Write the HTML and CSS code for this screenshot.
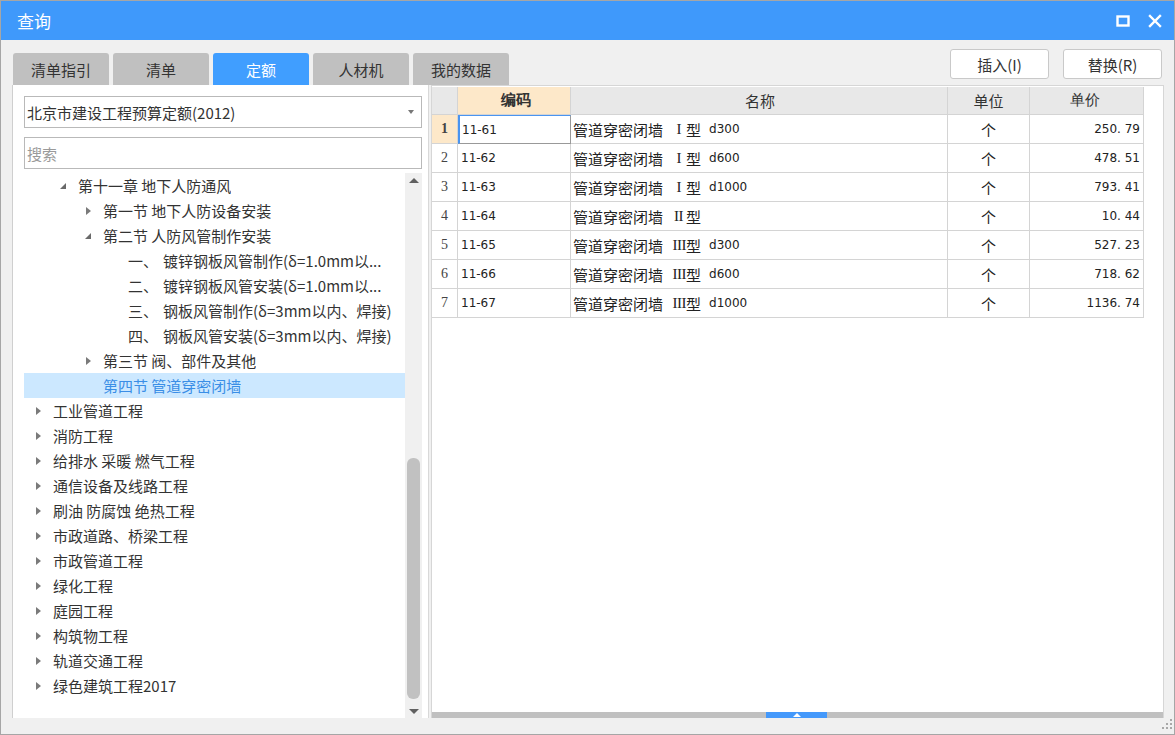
FILE: index.html
```html
<!DOCTYPE html>
<html lang="zh">
<head>
<meta charset="utf-8">
<title>查询</title>
<link rel="stylesheet" href="styles.css">
</head>
<body>
<div class="window">
  <div class="titlebar">
    <span class="title">查询</span>
    <div class="title-icons">
      <svg class="ico-max" width="14" height="12" viewBox="0 0 14 12"><rect x="1.5" y="1.5" width="11" height="9" fill="none" stroke="#fff" stroke-width="2.4"/></svg>
      <svg class="ico-close" width="14" height="14" viewBox="0 0 14 14"><path d="M2 2 L12 12 M12 2 L2 12" stroke="#fff" stroke-width="2.4" stroke-linecap="square"/></svg>
    </div>
  </div>
  <div class="content">
    <div class="toolbar">
      <div class="tabs">
        <div class="tab">清单指引</div>
        <div class="tab">清单</div>
        <div class="tab active">定额</div>
        <div class="tab">人材机</div>
        <div class="tab">我的数据</div>
      </div>
      <div class="buttons">
        <button class="btn">插入(I)</button>
        <button class="btn">替换(R)</button>
      </div>
    </div>
    <div class="main">
      <div class="left">
        <div class="select">
          <span>北京市建设工程预算定额(2012)</span>
          <span class="caret"></span>
        </div>
        <div class="search">搜索</div>
        <div class="tree-wrap">
          <div class="tree">
            <div class="node l1"><span class="arr open"></span><span class="txt">第十一章 地下人防通风</span></div>
            <div class="node l2"><span class="arr closed"></span><span class="txt">第一节 地下人防设备安装</span></div>
            <div class="node l2"><span class="arr open"></span><span class="txt">第二节 人防风管制作安装</span></div>
            <div class="node l3"><span class="num">一、</span><span class="txt">镀锌钢板风管制作(δ=1.0mm以...</span></div>
            <div class="node l3"><span class="num">二、</span><span class="txt">镀锌钢板风管安装(δ=1.0mm以...</span></div>
            <div class="node l3"><span class="num">三、</span><span class="txt">钢板风管制作(δ=3mm以内、焊接)</span></div>
            <div class="node l3"><span class="num">四、</span><span class="txt">钢板风管安装(δ=3mm以内、焊接)</span></div>
            <div class="node l2"><span class="arr closed"></span><span class="txt">第三节 阀、部件及其他</span></div>
            <div class="node l2 selected"><span class="arr none"></span><span class="txt">第四节 管道穿密闭墙</span></div>
            <div class="node l0"><span class="arr closed"></span><span class="txt">工业管道工程</span></div>
            <div class="node l0"><span class="arr closed"></span><span class="txt">消防工程</span></div>
            <div class="node l0"><span class="arr closed"></span><span class="txt">给排水 采暖 燃气工程</span></div>
            <div class="node l0"><span class="arr closed"></span><span class="txt">通信设备及线路工程</span></div>
            <div class="node l0"><span class="arr closed"></span><span class="txt">刷油 防腐蚀 绝热工程</span></div>
            <div class="node l0"><span class="arr closed"></span><span class="txt">市政道路、桥梁工程</span></div>
            <div class="node l0"><span class="arr closed"></span><span class="txt">市政管道工程</span></div>
            <div class="node l0"><span class="arr closed"></span><span class="txt">绿化工程</span></div>
            <div class="node l0"><span class="arr closed"></span><span class="txt">庭园工程</span></div>
            <div class="node l0"><span class="arr closed"></span><span class="txt">构筑物工程</span></div>
            <div class="node l0"><span class="arr closed"></span><span class="txt">轨道交通工程</span></div>
            <div class="node l0"><span class="arr closed"></span><span class="txt">绿色建筑工程2017</span></div>
          </div>
          <div class="vscroll">
            <span class="sarrow up"></span>
            <div class="vtrack"><div class="vthumb"></div></div>
            <span class="sarrow down"></span>
          </div>
        </div>
      </div>
      <div class="right">
        <div class="grid">
          <div class="grow head">
            <div class="c rn"></div>
            <div class="c code hl">编码</div>
            <div class="c name">名称</div>
            <div class="c unit">单位</div>
            <div class="c price">单价</div>
          </div>
          <div class="grow">
            <div class="c rn hl b">1</div>
            <div class="c code cur">11-61</div>
            <div class="c name">管道穿密闭墙<span class="rm p1">I</span>型<span class="dv">d300</span></div>
            <div class="c unit">个</div>
            <div class="c price">250. 79</div>
          </div>
          <div class="grow">
            <div class="c rn">2</div>
            <div class="c code">11-62</div>
            <div class="c name">管道穿密闭墙<span class="rm p1">I</span>型<span class="dv">d600</span></div>
            <div class="c unit">个</div>
            <div class="c price">478. 51</div>
          </div>
          <div class="grow">
            <div class="c rn">3</div>
            <div class="c code">11-63</div>
            <div class="c name">管道穿密闭墙<span class="rm p1">I</span>型<span class="dv">d1000</span></div>
            <div class="c unit">个</div>
            <div class="c price">793. 41</div>
          </div>
          <div class="grow">
            <div class="c rn">4</div>
            <div class="c code">11-64</div>
            <div class="c name">管道穿密闭墙<span class="rm p2">II</span>型</div>
            <div class="c unit">个</div>
            <div class="c price">10. 44</div>
          </div>
          <div class="grow">
            <div class="c rn">5</div>
            <div class="c code">11-65</div>
            <div class="c name">管道穿密闭墙<span class="rm">III</span>型<span class="dv">d300</span></div>
            <div class="c unit">个</div>
            <div class="c price">527. 23</div>
          </div>
          <div class="grow">
            <div class="c rn">6</div>
            <div class="c code">11-66</div>
            <div class="c name">管道穿密闭墙<span class="rm">III</span>型<span class="dv">d600</span></div>
            <div class="c unit">个</div>
            <div class="c price">718. 62</div>
          </div>
          <div class="grow">
            <div class="c rn">7</div>
            <div class="c code">11-67</div>
            <div class="c name">管道穿密闭墙<span class="rm">III</span>型<span class="dv">d1000</span></div>
            <div class="c unit">个</div>
            <div class="c price">1136. 74</div>
          </div>
        </div>
        <div class="filler"></div>
        <div class="hscroll"><div class="hthumb"><span class="tri"></span></div></div>
      </div>
    </div>
    <div class="statusbar">
      <svg class="grip" width="12" height="12" viewBox="0 0 12 12">
        <g fill="#a8a8a8">
          <rect x="9" y="1" width="2" height="2"/>
          <rect x="5" y="5" width="2" height="2"/><rect x="9" y="5" width="2" height="2"/>
          <rect x="1" y="9" width="2" height="2"/><rect x="5" y="9" width="2" height="2"/><rect x="9" y="9" width="2" height="2"/>
        </g>
      </svg>
    </div>
  </div>
</div>
</body>
</html>
```

FILE: styles.css
```css
* { box-sizing: border-box; }
html, body { margin: 0; padding: 0; }
body {
  width: 1175px;
  height: 735px;
  overflow: hidden;
  font-family: "Noto Sans CJK SC", "Noto Sans", sans-serif;
  color: #333;
  background: #f0f0f0;
}
.window {
  width: 1175px;
  height: 735px;
  border: 1px solid #a6a6a6;
  background: #f0f0f0;
  display: flex;
  flex-direction: column;
}
.titlebar {
  height: 39px;
  background: #3f99fb;
  display: flex;
  align-items: center;
  justify-content: space-between;
  padding: 0 12px 0 16px;
  flex: none;
}
.title { color: #fff; font-size: 17px; line-height: 1; }
.title-icons { display: flex; align-items: center; gap: 18px; }
.content {
  flex: 1;
  display: flex;
  flex-direction: column;
  padding: 0 10px 0 11px;
}
.toolbar {
  height: 45px;
  display: flex;
  justify-content: space-between;
  align-items: flex-start;
  flex: none;
}
.tabs { display: flex; gap: 4px; margin-top: 13px; margin-left: 1px; }
.tab {
  width: 96px;
  height: 32px;
  background: #c0c0c0;
  border-radius: 3px 3px 0 0;
  font-size: 15px;
  color: #333;
  display: flex;
  align-items: center;
  justify-content: center;
}
.tab.active { background: #409eff; color: #fff; }
.buttons { display: flex; gap: 14px; margin-top: 9px; margin-right: 2px; }
.btn {
  width: 99px;
  height: 30px;
  background: #fff;
  border: 1px solid #c9c9c9;
  border-radius: 3px;
  font-family: inherit;
  font-size: 15px;
  color: #333;
  padding: 0;
}
.main {
  height: 633px;
  display: flex;
  gap: 2px;
  flex: none;
}
.left {
  width: 417px;
  background: #fff;
  border-left: 1px solid #cfcfcf;
  border-right: 1px solid #d8d8d8;
  display: flex;
  flex-direction: column;
  padding: 11px 6px 0 11px;
}
.select, .search {
  height: 32px;
  border: 1px solid #b9b9b9;
  font-size: 15px;
  display: flex;
  align-items: center;
  padding-left: 2px;
  flex: none;
}
.select { justify-content: space-between; padding-right: 7px; color: #333; }
.caret {
  width: 0; height: 0;
  border-left: 3.5px solid transparent;
  border-right: 3.5px solid transparent;
  border-top: 4px solid #777;
}
.search { margin-top: 9px; color: #9a9a9a; }
.tree-wrap {
  flex: 1;
  display: flex;
  margin-top: 4px;
  min-height: 0;
}
.tree {
  flex: 1;
  padding-top: 0;
  min-width: 0;
}
.node {
  height: 25px;
  display: flex;
  align-items: center;
  font-size: 15px;
  color: #333;
  white-space: nowrap;
  padding-right: 4px;
}
.node .txt { overflow: hidden; }
.node.l0 { padding-left: 11px; }
.node.l1 { padding-left: 36px; }
.node.l2 { padding-left: 61px; }
.node.l3 { padding-left: 104px; }
.node .num { width: 35px; flex: none; }
.node.selected { background: #cce8ff; color: #3a8ee6; }
.arr { width: 18px; height: 10px; flex: none; position: relative; }
.arr.closed::before {
  content: "";
  position: absolute;
  left: 1px; top: 1px;
  border-top: 4px solid transparent;
  border-bottom: 4px solid transparent;
  border-left: 5px solid #7a7a7a;
}
.arr.open::before {
  content: "";
  position: absolute;
  left: 0; top: 2px;
  border-left: 6px solid transparent;
  border-bottom: 6px solid #6a6a6a;
}
.vscroll {
  width: 17px;
  flex: none;
  background: #f0f0f0;
  display: flex;
  flex-direction: column;
  align-items: center;
}
.sarrow {
  width: 0; height: 0;
  border-left: 5px solid transparent;
  border-right: 5px solid transparent;
  flex: none;
}
.sarrow.up { border-bottom: 5px solid #606060; margin: 5px 0 6px; }
.sarrow.down { border-top: 5px solid #606060; margin: 6px 0 4px; }
.vtrack { flex: 1; width: 100%; display: flex; flex-direction: column; justify-content: flex-end; padding: 0 2px 4px; }
.vthumb { height: 241px; background: #c1c1c1; border-radius: 6px; }
.right {
  flex: 1;
  background: #fff;
  border: 1px solid #d6d6d6;
  border-bottom: none;
  display: flex;
  flex-direction: column;
}
.grid { width: 712px; margin-top: 1px; }
.grow {
  display: grid;
  grid-template-columns: 26px 113px 377px 82px 114px;
  height: 29px;
}
.grow.head { height: 28px; }
.c {
  border-right: 1px solid #d4d4d4;
  border-bottom: 1px solid #d4d4d4;
  font-size: 13px;
  display: flex;
  align-items: center;
  white-space: nowrap;
  color: #222;
  font-family: "Noto Sans CJK SC", "DejaVu Sans", sans-serif;
}
.head .c {
  background: #e8e8e8;
  justify-content: center;
  font-size: 15px;
  color: #333;
}
.head .c.hl { background: #fde8c9; font-weight: bold; }
.rn { justify-content: center; color: #444; font-family: "Liberation Serif", serif; font-size: 14px; }
.rn.hl { background: #fde8c9; }
.rn.b { font-weight: bold; }
.code { padding-left: 3px; font-family: "DejaVu Sans", sans-serif; font-size: 12px; }
.code.cur { border: 1px solid #999; border-left: 2px solid #4a94f0; border-top: 1px solid #4a94f0; padding-left: 2px; }
.name { padding-left: 2px; font-size: 15px; }
.rm {
  display: inline-block;
  width: 23px;
  text-align: right;
  font-family: "Liberation Serif", serif;
  font-size: 15px;
  letter-spacing: -0.5px;
}
.rm.p1 { padding-right: 5px; }
.rm.p2 { padding-right: 3px; }
.dv { margin-left: 8px; font-family: "DejaVu Sans", sans-serif; font-size: 12px; }
.unit { justify-content: center; font-size: 15px; }
.price { justify-content: flex-end; padding-right: 3px; font-family: "DejaVu Sans", sans-serif; font-size: 12px; }
.filler { flex: 1; }
.hscroll {
  height: 6px;
  background: #c0c0c0;
  flex: none;
  position: relative;
}
.hthumb {
  position: absolute;
  left: 334px;
  top: 0;
  width: 61px;
  height: 6px;
  background: #4499fb;
  display: flex;
  justify-content: center;
  align-items: center;
}
.tri {
  width: 0; height: 0;
  border-left: 4px solid transparent;
  border-right: 4px solid transparent;
  border-bottom: 4px solid #fff;
}
.statusbar {
  flex: 1;
  display: flex;
  justify-content: flex-end;
  align-items: flex-start;
  margin-right: -9px;
}
```
